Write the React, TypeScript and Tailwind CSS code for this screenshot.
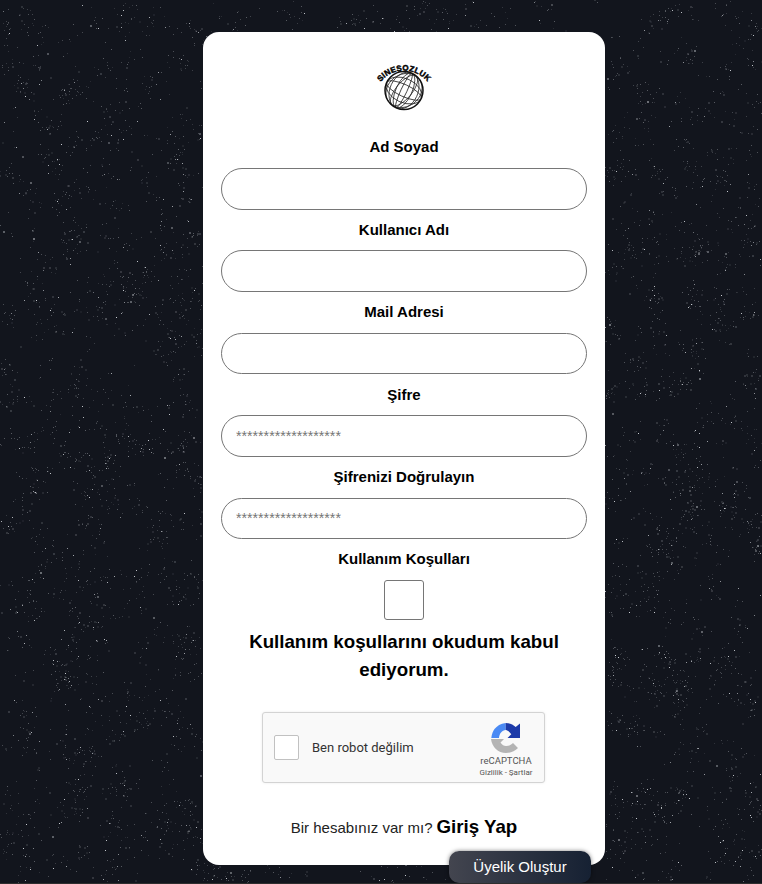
import React from "react";

function Speckle() {
  let s = 12345;
  const r = () => {
    s = (s * 1664525 + 1013904223) % 4294967296;
    return s / 4294967296;
  };
  const dots: { x: number; y: number; o: number; w: number }[] = [];
  for (let c = 0; c < 2600; c++) {
    const cx = r() * 762;
    const cy = r() * 884;
    const n = 1 + Math.floor(r() * 7);
    for (let i = 0; i < n; i++) {
      const b = r();
      dots.push({
        x: Math.round(cx + (r() - 0.5) * 18),
        y: Math.round(cy + (r() - 0.5) * 18),
        o: b > 0.9 ? 0.5 + r() * 0.4 : 0.1 + r() * 0.25,
        w: r() > 0.85 ? 2 : 1,
      });
    }
  }
  return (
    <svg className="absolute inset-0" width="762" height="884" aria-hidden="true">
      {dots.map((d, i) => (
        <rect key={i} x={d.x} y={d.y} width={d.w} height={d.w} fill="#dfe3e8" opacity={d.w === 2 ? d.o * 0.5 : d.o} />
      ))}
    </svg>
  );
}

function Logo() {
  return (
    <svg width="64" height="60" viewBox="0 0 64 60" aria-label="Sinesozluk">
      <defs>
        <path id="arc" d="M3 40 A30 30 0 0 1 61 40" />
        <clipPath id="g">
          <circle cx="32" cy="37.5" r="19" />
        </clipPath>
      </defs>
      <circle cx="32" cy="37.5" r="19" fill="#fff" />
      <g fill="none" stroke="#222" strokeWidth="0.75" clipPath="url(#g)">
        <ellipse cx="32" cy="37.5" rx="8" ry="19" transform="rotate(25 32 37.5)" />
        <ellipse cx="32" cy="37.5" rx="14" ry="19" transform="rotate(25 32 37.5)" />
        <ellipse cx="32" cy="37.5" rx="3" ry="19" transform="rotate(25 32 37.5)" />
        <ellipse cx="32" cy="37.5" rx="19" ry="6" transform="rotate(25 32 37.5)" />
        <ellipse cx="32" cy="37.5" rx="19" ry="12" transform="rotate(25 32 37.5)" />
        <ellipse cx="32" cy="37.5" rx="19" ry="16" transform="rotate(-35 32 37.5)" />
        <ellipse cx="32" cy="37.5" rx="19" ry="8" transform="rotate(-50 32 37.5)" />
      </g>
      <circle cx="32" cy="37.5" r="19" fill="none" stroke="#111" strokeWidth="1.5" />
      <text fontFamily="Liberation Sans, sans-serif" fontSize="8" fontWeight="900" fill="#000" stroke="#000" strokeWidth="0.45" letterSpacing="0.2">
        <textPath href="#arc" startOffset="50%" textAnchor="middle">SINESOZLUK</textPath>
      </text>
    </svg>
  );
}

function RecaptchaIcon() {
  return (
    <svg width="30" height="30" viewBox="0 0 30 30" aria-hidden="true">
      <path d="M0.3 15 C0.8 11 2 8 3.5 6 C6 3 9.5 0.6 14.7 0 L14.7 7 C11 7.3 8.3 10.5 8 15 Z" fill="#4a8af4" />
      <path d="M14.7 0 C19 0 22 1.5 24.7 3.9 L29 0.5 L29 15 L16.5 15 L20.3 11.3 C19 9 17 7.5 14.7 7 Z" fill="#1c3aa9" />
      <path d="M0 16 H13 L9.5 19.5 C11 22 13 23 15 23 C18 23 20 22 22 20 L27 25 C24 28 20 30 15 30 C7 30 1 24 0 16 Z" fill="#b4b4b4" />
    </svg>
  );
}

function Field({ label, placeholder }: { label: string; placeholder?: string }) {
  return (
    <>
      <label className="flex h-[40.8px] items-center justify-center text-[15px] font-bold text-black">{label}</label>
      <input
        placeholder={placeholder}
        className="block h-[41.6px] w-full rounded-[21px] border border-[#767676] bg-white px-[14px] text-[14.2px] text-black outline-none placeholder:text-[#757575]"
      />
    </>
  );
}

export default function App() {
  return (
    <div className="h-[884px] w-full overflow-hidden bg-[#2e2e2e] font-['Liberation_Sans',Arial,sans-serif]">
      <div className="relative h-[883px] overflow-hidden bg-[#12151d]">
        <Speckle />
        <div className="relative pl-[203px] pt-8">
          <main className="relative h-[833px] w-[402px] rounded-2xl bg-white px-[18px] pt-[21px] text-center">
            <div className="flex h-[74.2px] justify-center">
              <Logo />
            </div>
            <Field label="Ad Soyad" />
            <Field label="Kullanıcı Adı" />
            <Field label="Mail Adresi" />
            <Field label="Şifre" placeholder="*******************" />
            <Field label="Şifrenizi Doğrulayın" placeholder="*******************" />
            <div className="flex h-[40.8px] items-center justify-center text-[15px] font-bold text-black">Kullanım Koşulları</div>
            <div className="flex justify-center">
              <input type="checkbox" className="h-10 w-10 appearance-none rounded-[3px] border border-[#767676] bg-white" />
            </div>
            <p className="mt-[8px] text-[18.72px] font-bold leading-[28px] text-black">
              Kullanım koşullarını okudum kabul
              <br />
              ediyorum.
            </p>
            <div className="ml-[41px] mt-[28px] flex h-[71px] w-[283px] items-center rounded-[3px] border border-[#d3d3d3] bg-[#f9f9f9] pl-[11px] pr-[10px] shadow-[0_0_3px_rgba(0,0,0,0.08)]">
              <div className="h-[25px] w-[25px] rounded-[2px] border-[1.5px] border-[#c1c1c1] bg-white" />
              <span className="ml-[13px] flex-1 text-left font-['Roboto',sans-serif] text-[13px] text-[#333]">Ben robot değilim</span>
              <div className="flex w-[56px] flex-col items-center self-start pt-[10px]">
                <RecaptchaIcon />
                <span className="mt-[1px] font-['Roboto',sans-serif] text-[9.5px] leading-[13px] text-[#555]">reCAPTCHA</span>
                <span className="font-['Roboto',sans-serif] text-[8px] leading-[11px] text-[#555]">Gizlilik - Şartlar</span>
              </div>
            </div>
            <p className="mt-[30px] flex items-baseline justify-center text-[15px] text-[#222]">
              Bir hesabınız var mı?
              <span className="ml-[4px] text-[18.72px] font-bold text-black">Giriş Yap</span>
            </p>
          </main>
        </div>
        <button className="absolute left-[449px] top-[851px] h-8 w-[142px] rounded-[10px] bg-gradient-to-r from-[#43454f] to-[#162133] text-[15px] text-white shadow-[0_0_4px_rgba(0,0,0,0.5)]">
          Üyelik Oluştur
        </button>
      </div>
    </div>
  );
}
